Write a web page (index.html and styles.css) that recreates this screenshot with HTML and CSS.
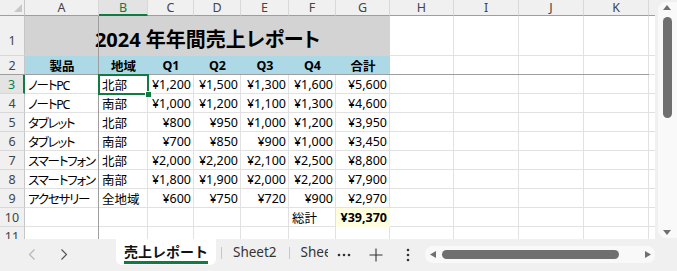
FILE: index.html
```html
<!DOCTYPE html>
<html lang="ja">
<head>
  <meta charset="UTF-8" />
  <meta name="viewport" content="width=device-width, initial-scale=1.0" />
  <title>売上レポート</title>
  <link rel="stylesheet" href="styles.css">
</head>
<body>
  <div class="app">
    <div class="main">
      <div class="sheet">
        <div class="cells">
          <!-- column headers -->
          <div class="corner"><svg width="8" height="8" viewBox="0 0 8 8"><polygon points="8,0 8,8 0,8" fill="#c8c8c8"/></svg></div>
          <div class="colh">A</div>
          <div class="colh sel">B</div>
          <div class="colh">C</div>
          <div class="colh">D</div>
          <div class="colh">E</div>
          <div class="colh">F</div>
          <div class="colh">G</div>
          <div class="colh">H</div>
          <div class="colh">I</div>
          <div class="colh">J</div>
          <div class="colh">K</div>
          <div class="colh edge"></div>

          <!-- row 1 -->
          <div class="rowh tall">1</div>
          <div class="title">2024 年年間売上レポート</div>
          <div></div><div></div><div></div><div></div><div class="edge"></div>

          <!-- row 2 -->
          <div class="rowh">2</div>
          <div class="hd">製品</div>
          <div class="hd">地域</div>
          <div class="hd">Q1</div>
          <div class="hd">Q2</div>
          <div class="hd">Q3</div>
          <div class="hd">Q4</div>
          <div class="hd">合計</div>
          <div></div><div></div><div></div><div></div><div class="edge"></div>

          <!-- row 3 -->
          <div class="rowh sel">3</div>
          <div class="kana">ノートPC</div>
          <div>北部</div>
          <div class="num">¥1,200</div>
          <div class="num">¥1,500</div>
          <div class="num">¥1,300</div>
          <div class="num">¥1,600</div>
          <div class="num">¥5,600</div>
          <div></div><div></div><div></div><div></div><div class="edge"></div>

          <!-- row 4 -->
          <div class="rowh">4</div>
          <div class="kana">ノートPC</div>
          <div>南部</div>
          <div class="num">¥1,000</div>
          <div class="num">¥1,200</div>
          <div class="num">¥1,100</div>
          <div class="num">¥1,300</div>
          <div class="num">¥4,600</div>
          <div></div><div></div><div></div><div></div><div class="edge"></div>

          <!-- row 5 -->
          <div class="rowh">5</div>
          <div class="kana">タブレット</div>
          <div>北部</div>
          <div class="num">¥800</div>
          <div class="num">¥950</div>
          <div class="num">¥1,000</div>
          <div class="num">¥1,200</div>
          <div class="num">¥3,950</div>
          <div></div><div></div><div></div><div></div><div class="edge"></div>

          <!-- row 6 -->
          <div class="rowh">6</div>
          <div class="kana">タブレット</div>
          <div>南部</div>
          <div class="num">¥700</div>
          <div class="num">¥850</div>
          <div class="num">¥900</div>
          <div class="num">¥1,000</div>
          <div class="num">¥3,450</div>
          <div></div><div></div><div></div><div></div><div class="edge"></div>

          <!-- row 7 -->
          <div class="rowh">7</div>
          <div class="kana">スマートフォン</div>
          <div>北部</div>
          <div class="num">¥2,000</div>
          <div class="num">¥2,200</div>
          <div class="num">¥2,100</div>
          <div class="num">¥2,500</div>
          <div class="num">¥8,800</div>
          <div></div><div></div><div></div><div></div><div class="edge"></div>

          <!-- row 8 -->
          <div class="rowh">8</div>
          <div class="kana">スマートフォン</div>
          <div>南部</div>
          <div class="num">¥1,800</div>
          <div class="num">¥1,900</div>
          <div class="num">¥2,000</div>
          <div class="num">¥2,200</div>
          <div class="num">¥7,900</div>
          <div></div><div></div><div></div><div></div><div class="edge"></div>

          <!-- row 9 -->
          <div class="rowh">9</div>
          <div class="kana">アクセサリー</div>
          <div>全地域</div>
          <div class="num">¥600</div>
          <div class="num">¥750</div>
          <div class="num">¥720</div>
          <div class="num">¥900</div>
          <div class="num">¥2,970</div>
          <div></div><div></div><div></div><div></div><div class="edge"></div>

          <!-- row 10 -->
          <div class="rowh">10</div>
          <div></div><div></div><div></div><div></div><div></div>
          <div>総計</div>
          <div class="total">¥39,370</div>
          <div></div><div></div><div></div><div></div><div class="edge"></div>

          <!-- row 11 -->
          <div class="rowh">11</div>
          <div></div><div></div><div></div><div></div><div></div><div></div><div></div>
          <div></div><div></div><div></div><div></div><div class="edge"></div>
        </div>

        <div class="freeze-v"></div>
        <div class="freeze-h"></div>
        <div class="selection"><span class="handle"></span></div>
      </div>

      <div class="vscroll">
        <div class="vtrack">
          <svg width="8" height="5" viewBox="0 0 8 5"><polygon points="4,0 8,5 0,5" fill="#707070"/></svg>
          <div class="vthumb"></div>
          <div class="grow"></div>
          <svg width="8" height="5" viewBox="0 0 8 5"><polygon points="0,0 8,0 4,5" fill="#707070"/></svg>
        </div>
      </div>
    </div>

    <div class="tabbar">
      <div class="nav">
        <div class="navbtn"><svg width="8" height="11" viewBox="0 0 8 11"><polyline points="6.5,0.5 1.5,5.5 6.5,10.5" fill="none" stroke="#b4b4b4" stroke-width="1.1"/></svg></div>
        <div class="navbtn"><svg width="8" height="11" viewBox="0 0 8 11"><polyline points="1.5,0.5 6.5,5.5 1.5,10.5" fill="none" stroke="#505050" stroke-width="1.1"/></svg></div>
      </div>

      <div class="tabs">
        <div class="tab active"><span class="label">売上レポート</span></div>
        <div class="tabsep"></div>
        <div class="tab">Sheet2</div>
        <div class="tabsep"></div>
        <div class="tab">Sheet3</div>
      </div>

      <div class="tool">
        <svg width="14" height="4" viewBox="0 0 14 4"><circle cx="2" cy="2" r="1.3" fill="#333"/><circle cx="7" cy="2" r="1.3" fill="#333"/><circle cx="12" cy="2" r="1.3" fill="#333"/></svg>
      </div>
      <div class="tool">
        <svg width="14" height="14" viewBox="0 0 14 14"><path d="M7 0.5V13.5M0.5 7H13.5" stroke="#333" stroke-width="1.1"/></svg>
      </div>
      <div class="tool">
        <svg width="4" height="14" viewBox="0 0 4 14"><circle cx="2" cy="2" r="1.3" fill="#333"/><circle cx="2" cy="7" r="1.3" fill="#333"/><circle cx="2" cy="12" r="1.3" fill="#333"/></svg>
      </div>

      <div class="htrack">
        <svg width="6" height="7" viewBox="0 0 6 7"><polygon points="6,0 6,7 0,3.5" fill="#707070"/></svg>
        <div class="hthumb"></div>
        <div class="grow"></div>
        <svg width="6" height="7" viewBox="0 0 6 7"><polygon points="0,0 6,3.5 0,7" fill="#707070"/></svg>
      </div>
    </div>
  </div>
</body>
</html>
```

FILE: styles.css
```css
html, body {
  margin: 0;
  padding: 0;
  background: #f0f0f0;
  font-family: "Noto Sans", "Noto Sans CJK JP", sans-serif;
  font-size: 12.5px;
  color: #000;
}

.app {
  width: 677px;
  height: 271px;
  display: flex;
  flex-direction: column;
  overflow: hidden;
}

.main {
  display: flex;
  height: 239px;
}

.sheet {
  position: relative;
  width: 655px;
  height: 239px;
  overflow: hidden;
  background: #fff;
}

.cells {
  display: grid;
  grid-template-columns: 25px 74px 49px 46px 47px 48px 47px 54px 64px 65px 65px 65px 6px;
  grid-template-rows: 16px 40px repeat(10, 19px);
}

.cells > div {
  box-sizing: border-box;
  border-right: 1px solid #e1e1e1;
  border-bottom: 1px solid #e1e1e1;
  display: flex;
  align-items: center;
  overflow: hidden;
  white-space: nowrap;
  padding: 0 2px 0 3px;
  font-feature-settings: "palt" 1;
}

.cells > .edge {
  border-right: none;
}

.cells > .kana {
  letter-spacing: -1.2px;
}

/* headers */
.corner {
  background: #f0f0f0;
  justify-content: flex-end;
  align-items: flex-end !important;
  padding: 0 2px 3px 0 !important;
  border-right-color: #c6c6c6 !important;
  border-bottom-color: #9e9e9e !important;
}

.corner svg {
  display: block;
}

.colh {
  background: #f0f0f0;
  border-right-color: #d8d8d8 !important;
  border-bottom-color: #9e9e9e !important;
  justify-content: center;
  color: #444;
  padding: 0 !important;
}

.colh.sel {
  background: #e3e3e3;
  color: #107c41;
  border-bottom: 2px solid #107c41 !important;
}

.rowh {
  background: #f0f0f0;
  border-right-color: #c6c6c6 !important;
  border-bottom-color: #d8d8d8 !important;
  justify-content: center;
  color: #444;
  padding: 0 !important;
}

.rowh.tall {
  align-items: flex-end !important;
  padding-bottom: 6px !important;
}

.rowh.sel {
  background: #e3e3e3;
  color: #107c41;
  border-right: 2px solid #107c41 !important;
}

/* content cells */
.title {
  grid-column: span 7;
  background: #d3d3d3;
  border-color: #d3d3d3 !important;
  justify-content: center;
  align-items: flex-end !important;
  padding-bottom: 1px !important;
  font-size: 20px;
  font-weight: bold;
  line-height: 28px;
}

.hd {
  background: #add8e6;
  border-color: #add8e6 !important;
  justify-content: center;
  font-weight: bold;
}

.num {
  justify-content: flex-end;
}

.total {
  background: #ffffe0;
  border-color: #ffffe0 !important;
  justify-content: flex-end;
  font-weight: bold;
}

/* freeze panes and selection */
.freeze-v {
  position: absolute;
  left: 98px;
  top: 16px;
  width: 1px;
  height: 223px;
  background: #9e9e9e;
}

.freeze-h {
  position: absolute;
  left: 0;
  top: 74px;
  width: 649px;
  height: 1px;
  background: #9e9e9e;
}

.selection {
  position: absolute;
  left: 98px;
  top: 74px;
  width: 51px;
  height: 21px;
  box-sizing: border-box;
  border: 2px solid #107c41;
}

.handle {
  position: absolute;
  right: -5px;
  bottom: -5px;
  width: 5px;
  height: 5px;
  background: #107c41;
  border: 1px solid #fff;
}

/* vertical scrollbar */
.vscroll {
  width: 22px;
  height: 239px;
}

.vtrack {
  margin: 2px 0 0 3px;
  width: 19px;
  height: 236px;
  box-sizing: border-box;
  padding: 3px 0 3px;
  background: #f9f9f9;
  border-radius: 8px 0 0 8px;
  display: flex;
  flex-direction: column;
  align-items: center;
}

.vtrack svg {
  display: block;
  margin-left: -1px;
}

.vthumb {
  margin-top: 7px;
  width: 9px;
  height: 101px;
  background: #6f6f6f;
  border-radius: 5px;
  margin-left: -1px;
}

.grow {
  flex: 1;
}

/* sheet tabs */
.tabbar {
  height: 32px;
  display: flex;
  align-items: flex-start;
  background: #f0f0f0;
  color: #333;
}

.nav {
  display: flex;
  width: 116px;
  flex: none;
  box-sizing: border-box;
  padding-left: 16px;
}

.navbtn {
  width: 32px;
  height: 32px;
  display: flex;
  align-items: center;
  justify-content: center;
}

.navbtn svg {
  display: block;
  margin-top: -1px;
}

.tabs {
  display: flex;
  align-items: flex-start;
  flex: none;
  width: 212px;
  overflow: hidden;
}

.tab {
  flex: none;
  padding: 4px 12px 0 11px;
  line-height: 18px;
  font-size: 13.5px;
}

.tab.active {
  width: 100px;
  height: 26px;
  box-sizing: border-box;
  padding: 3px 0 0;
  background: #fff;
  border-radius: 0 0 6px 6px;
  text-align: center;
  color: #111;
}

.tab.active .label {
  display: inline-block;
  font-size: 14px;
  font-weight: bold;
  line-height: 19px;
  border-bottom: 3px solid #107c41;
}

.tabsep {
  flex: none;
  width: 1px;
  height: 12px;
  margin-top: 8px;
  background: #c8c8c8;
}

.tab.active + .tabsep {
  margin-left: 5px;
}

.tool {
  flex: none;
  width: 32px;
  height: 32px;
  display: flex;
  align-items: center;
  justify-content: center;
}

.tool svg {
  display: block;
}

.htrack {
  flex: none;
  margin: 7px 0 0 1px;
  width: 230px;
  height: 17px;
  box-sizing: border-box;
  padding: 0 4px 0 5px;
  background: #f9f9f9;
  border-radius: 8px;
  display: flex;
  align-items: center;
}

.htrack svg {
  display: block;
}

.hthumb {
  margin-left: 6px;
  width: 177px;
  height: 9px;
  background: #6f6f6f;
  border-radius: 5px;
}
```
